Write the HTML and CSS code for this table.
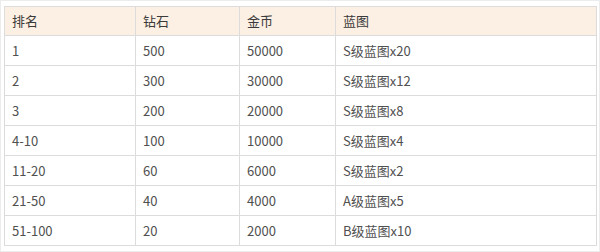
FILE: index.html
```html
<!DOCTYPE html>
<html lang="zh">
<head>
<meta charset="utf-8">
<link rel="stylesheet" href="styles.css">
</head>
<body>
<div class="frame">
<table class="rank">
<colgroup>
<col class="c1"><col class="c2"><col class="c3"><col class="c4">
</colgroup>
<thead>
<tr><th>排名</th><th>钻石</th><th>金币</th><th>蓝图</th></tr>
</thead>
<tbody>
<tr><td>1</td><td>500</td><td>50000</td><td>S级蓝图x20</td></tr>
<tr><td>2</td><td>300</td><td>30000</td><td>S级蓝图x12</td></tr>
<tr><td>3</td><td>200</td><td>20000</td><td>S级蓝图x8</td></tr>
<tr><td>4-10</td><td>100</td><td>10000</td><td>S级蓝图x4</td></tr>
<tr><td>11-20</td><td>60</td><td>6000</td><td>S级蓝图x2</td></tr>
<tr><td>21-50</td><td>40</td><td>4000</td><td>A级蓝图x5</td></tr>
<tr><td>51-100</td><td>20</td><td>2000</td><td>B级蓝图x10</td></tr>
</tbody>
</table>
</div>
</body>
</html>
```
FILE: styles.css
```css
html, body {
  margin: 0;
  padding: 0;
  background: #fff;
}
.frame {
  box-sizing: border-box;
  width: 600px;
  height: 252px;
  border: 1px solid #ececec;
  padding: 5px 4px 0 3px;
}
.rank {
  border-collapse: collapse;
  table-layout: fixed;
  width: 592px;
  font-family: "Noto Sans CJK SC", "Noto Sans", sans-serif;
  font-size: 13px;
  color: #505050;
}
.c1 { width: 131px; }
.c2 { width: 104px; }
.c3 { width: 96px; }
.c4 { width: 261px; }
.rank th, .rank td {
  border: 1px solid #dcdcdc;
  text-align: left;
  padding: 0 0 0 7px;
  height: 29px;
  line-height: 18px;
  font-weight: normal;
  white-space: nowrap;
}
.rank th {
  background: #fcefe3;
  height: 28px;
  color: #3a3a3a;
}
```
